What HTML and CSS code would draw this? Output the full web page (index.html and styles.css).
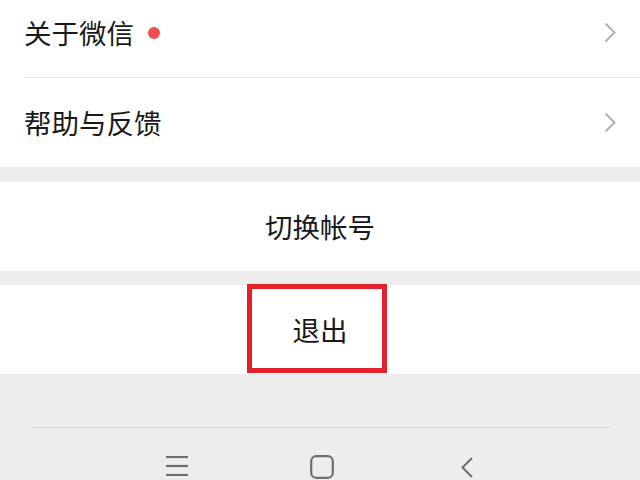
FILE: index.html
```html
<!DOCTYPE html>
<html lang="zh-CN">
<head>
<meta charset="utf-8">
<title>设置</title>
<link rel="stylesheet" href="styles.css">
</head>
<body>
<div class="page">
  <div class="group">
    <div class="cell">
      <span class="label">关于微信</span>
      <span class="dot"></span>
      <svg class="arrow" width="12" height="21" viewBox="0 0 12 21"><polyline points="1.5,1.5 10.5,10.5 1.5,19.5" fill="none" stroke="#b2b2b2" stroke-width="2"/></svg>
    </div>
    <div class="cell">
      <span class="label">帮助与反馈</span>
      <svg class="arrow" width="12" height="21" viewBox="0 0 12 21"><polyline points="1.5,1.5 10.5,10.5 1.5,19.5" fill="none" stroke="#b2b2b2" stroke-width="2"/></svg>
    </div>
  </div>
  <div class="button switch">切换帐号</div>
  <div class="button logout">
    退出
    <div class="highlight"></div>
  </div>
  <div class="navbar">
    <div class="nav-item">
      <svg class="ico-menu" width="22" height="20" viewBox="0 0 22 20"><g stroke="#6e6e6e" stroke-width="2.2"><line x1="0" y1="1" x2="22" y2="1"/><line x1="0" y1="10" x2="22" y2="10"/><line x1="0" y1="19" x2="22" y2="19"/></g></svg>
    </div>
    <div class="nav-item">
      <svg class="ico-home" width="24" height="24" viewBox="0 0 24 24"><rect x="1.2" y="1.2" width="21.6" height="21.6" rx="5" fill="none" stroke="#6e6e6e" stroke-width="2.2"/></svg>
    </div>
    <div class="nav-item">
      <svg class="ico-back" width="12" height="22" viewBox="0 0 12 22"><polyline points="11,1 1.5,10.5 11,20" fill="none" stroke="#6e6e6e" stroke-width="2"/></svg>
    </div>
  </div>
</div>
</body>
</html>
```

FILE: styles.css
```css
html, body {
  margin: 0;
  padding: 0;
  background: #ededed;
  overflow: hidden;
}

body {
  font-family: "Noto Sans CJK SC", "Noto Sans", sans-serif;
  color: #191919;
  width: 640px;
  height: 480px;
}

.page {
  margin-top: -12px;
}

.group {
  background: #ffffff;
}

.cell {
  display: flex;
  align-items: center;
  height: 89px;
  margin-left: 24px;
  padding-right: 24px;
  border-bottom: 1px solid #e5e5e5;
  box-sizing: content-box;
}

.cell:last-child {
  border-bottom: none;
}

.label {
  font-size: 27.5px;
  line-height: 1;
}

.dot {
  width: 12px;
  height: 12px;
  border-radius: 50%;
  background: #f24d4f;
  margin-left: 14px;
}

.arrow {
  margin-left: auto;
}

.button {
  background: #ffffff;
  height: 89px;
  display: flex;
  align-items: center;
  justify-content: center;
  font-size: 27.5px;
  line-height: 1;
}

.switch {
  margin-top: 15px;
}

.logout {
  margin-top: 14px;
  position: relative;
}

.highlight {
  position: absolute;
  left: 247px;
  top: -1px;
  width: 140px;
  height: 89px;
  box-sizing: border-box;
  border: 5px solid #e3212b;
}

.navbar {
  margin: 53px 29px 0 32px;
  border-top: 1px solid #d9d9d9;
  display: flex;
  justify-content: center;
  padding-top: 27px;
}

.nav-item {
  width: 145px;
  display: flex;
  justify-content: center;
  align-items: flex-start;
}

.ico-menu {
  margin-top: 1px;
}

.ico-back {
  margin-top: 2px;
}
```
